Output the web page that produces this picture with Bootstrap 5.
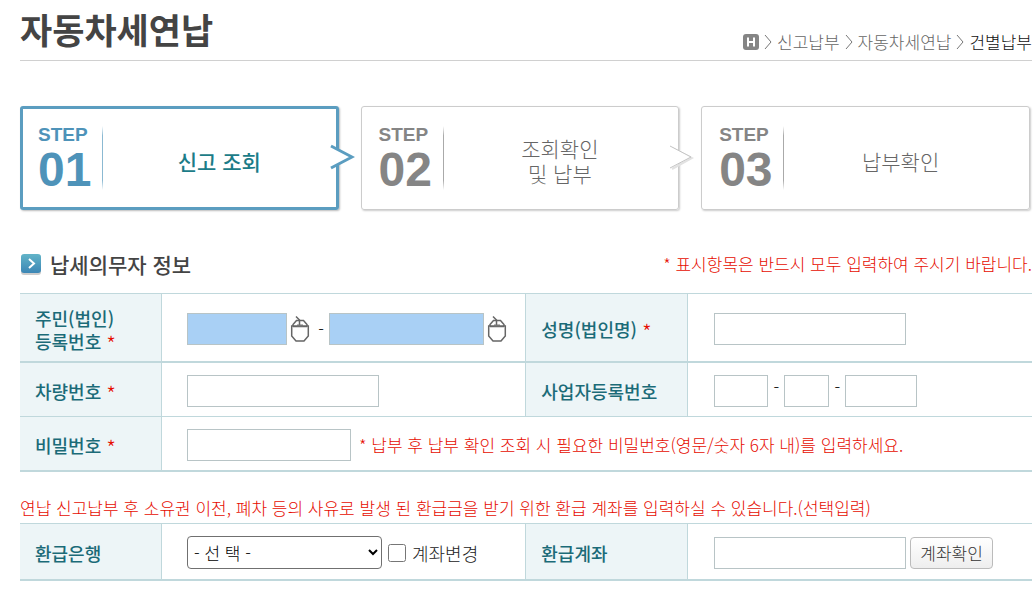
<!DOCTYPE html>
<html lang="ko">
<head>
<meta charset="utf-8">
<meta name="viewport" content="width=device-width, initial-scale=1">
<title>자동차세연납</title>
<link href="https://cdn.jsdelivr.net/npm/bootstrap@5.3.0/dist/css/bootstrap.min.css" rel="stylesheet">
<style>
body{font-family:"Noto Sans CJK KR",sans-serif;font-size:17px;line-height:24px;color:#222;font-weight:300}
.page{padding:0 4px 8px 20px}
.page-head{height:61px;border-bottom:1px solid #d0d0d0}
.page-head h1{font-size:35px;line-height:58px;font-weight:700;color:#444}
.crumbs{line-height:24px;padding-bottom:6px}
.crumbs a{color:#666}
.crumbs .current{color:#111}
.steps{display:grid;grid-template-columns:31fr 31fr 32fr;gap:22px;margin:45px 2px 0 0}
.step{position:relative;height:104px;border:1px solid #ccc;border-radius:3px;box-shadow:1px 1px 2px #ccc;padding:2px;color:#666}
.step.active{border:3px solid #5b9dc0;padding:0;box-shadow:1px 1px 2px #bbb;color:#1c7c88}
.step-no{width:79px;padding:18px 0 0 15px;color:#858585;font-family:"Liberation Sans",sans-serif;font-weight:700}
.step.active .step-no{color:#4e93b9}
.step-no small{font-size:19px;line-height:16px}
.step-no b{font-size:48px;line-height:54px}
.step-rule{width:1px;height:64px;background:linear-gradient(transparent,#aaa 15%,#aaa 85%,transparent)}
.step.active .step-rule{background:linear-gradient(transparent,#8bb9d2 15%,#8bb9d2 85%,transparent)}
.step-name{font-size:21px;line-height:25px;padding-top:6px}
.step:last-child .step-name{padding-right:10px}
.step.active .step-name{font-weight:500}
.step-arrow{position:absolute;right:-16px;top:36px}
.step.active .step-arrow{top:34px;right:-19px}
.section-head{padding:41px 0 16px}
.section-head h2{font-size:21px;line-height:26px;font-weight:500;color:#444}
.req,.notice{color:#e60c00}
.form-grid{width:100%;table-layout:fixed;border-collapse:separate;border-spacing:0;border-top:1px solid #c0d8dc}
.form-grid th,.form-grid td{border-bottom:1px solid #c0d8dc;border-right:1px solid #c0d8dc;height:54px;padding:2px 0 0 26px}
.form-grid tr>:last-child{border-right:0}
.form-grid .thick>*{border-bottom-width:2px;height:55px}
.form-grid th{background:#edf5f7;color:#1b6b78;font-size:18px;line-height:23px;font-weight:500;padding:4px 4px 0 15px}
.form-grid th:first-child+td{padding-left:25px}
.form-grid .req{font-weight:300;font-size:22px;line-height:0;vertical-align:-4px}
.c-label{width:142px}.c-field{width:36%}.c-label2{width:162px}
.form-grid .tall>*{height:69px}
.form-grid .bank-row>*{height:57px}
.box{height:32px;border:1px solid #b8c4c6;border-radius:0;background:#fff;padding:0 6px}
.box.secure{background:#a9d0f5}
.w-a{width:100px}.w-b{width:155px}.w-c{width:192px}.w-d{width:164px}.w-e{width:54px}.w-f{width:45px}.w-g{width:72px}
.mouse{margin-left:3px}
.dash{width:16px;text-align:center;color:#000}
.bank{width:195px;height:33px;border:1px solid #707070;border-radius:4px;background:#fff;color:#000;font-weight:300;font-size:17px;padding:0 2px}
.tick{width:18px;height:18px;margin:0 6px}
.tick-label{font-size:18px}
.check-btn{height:32px;border:1px solid #bbb;border-radius:4px;background:linear-gradient(#fff,#eee);color:#333;font-weight:300;font-size:17px;line-height:28px;padding:0 9px}
.refund-note{padding:24px 0 3px}
</style>
</head>
<body>
<svg width="0" height="0" class="position-absolute" aria-hidden="true">
<symbol id="mouse" viewBox="0 0 20 28"><g fill="none" stroke="#666" stroke-width="1.500"><path d="M6 1.500L9.500 5v7"/><path d="M6.500 5.500h7L17 9.500v1.500H3V9.500zM3 11H1.700v10L6 26h8l4.300-5V11H17M3 11.500h14"/></g><path d="M7 10.500h6" stroke="#777" stroke-width="2"/></symbol>
</svg>
<main class="page">
<header class="page-head d-flex justify-content-between align-items-end">
<h1 class="m-0 align-self-start">자동차세연납</h1>
<nav class="crumbs d-flex align-items-center" aria-label="breadcrumb">
<a href="#" aria-label="홈" class="d-flex me-1"><svg width="16" height="16"><rect width="16" height="16" rx="3" fill="#858585"/><path d="M5 3.500v9M11 3.500v9M5 8h6" stroke="#fff" stroke-width="2"/></svg></a>
<svg class="me-1" width="10" height="18"><path d="M2 2l6 7-6 7" fill="none" stroke="#777"/></svg>
<a href="#" class="text-decoration-none me-1">신고납부</a>
<svg class="me-1" width="10" height="18"><path d="M2 2l6 7-6 7" fill="none" stroke="#777"/></svg>
<a href="#" class="text-decoration-none me-1">자동차세연납</a>
<svg class="me-1" width="10" height="18"><path d="M2 2l6 7-6 7" fill="none" stroke="#777"/></svg>
<span class="current" aria-current="page">건별납부</span>
</nav>
</header>

<section class="steps">
<div class="step active d-flex align-items-center">
<div class="step-no d-flex flex-column align-self-start"><small>STEP</small><b>01</b></div><div class="step-rule"></div>
<div class="step-name flex-grow-1 text-center">신고 조회</div>
<svg class="step-arrow" width="25" height="30"><path d="M2 2v24h4V2z" fill="#fff"/><path d="M1 3l21 11L1 25" fill="#fff" stroke="#5b9dc0" stroke-width="3"/></svg>
</div>
<div class="step d-flex align-items-center">
<div class="step-no d-flex flex-column align-self-start"><small>STEP</small><b>02</b></div><div class="step-rule"></div>
<div class="step-name flex-grow-1 text-center">조회확인<br>및 납부</div>
<svg class="step-arrow" width="25" height="30"><path d="M3 5l20 10L3 26" fill="none" stroke="#e2e2e2" stroke-width="2"/><path d="M1 3l21 11L1 25" fill="#fff" stroke="#c4c4c4"/></svg>
</div>
<div class="step d-flex align-items-center">
<div class="step-no d-flex flex-column align-self-start"><small>STEP</small><b>03</b></div><div class="step-rule"></div>
<div class="step-name flex-grow-1 text-center">납부확인</div>
</div>
</section>

<form>
<div class="section-head d-flex justify-content-between align-items-center">
<h2 class="m-0 d-flex align-items-center gap-2"><svg width="22" height="22"><defs><linearGradient id="sq" x2="0" y2="1"><stop stop-color="#62b4c8"/><stop offset="1" stop-color="#3c86b5"/></linearGradient></defs><rect x="1" y="3" width="20" height="19" rx="3" fill="#ccc"/><rect x="1" y="1" width="20" height="19" rx="3" fill="url(#sq)"/><path d="M9 6l5 4.500L9 15" fill="none" stroke="#fff" stroke-width="2"/></svg>납세의무자 정보</h2>
<div class="notice">* 표시항목은 반드시 모두 입력하여 주시기 바랍니다.</div>
</div>
<table class="form-grid">
<colgroup><col class="c-label"><col class="c-field"><col class="c-label2"><col></colgroup>
<tr class="thick tall">
<th scope="row"><label for="id1">주민(법인)<br>등록번호 <span class="req">*</span></label></th>
<td><div class="d-flex align-items-center"><input id="id1" class="box secure w-a"><svg width="20" height="28" class="mouse"><use href="#mouse"/></svg><span class="dash mouse">-</span><input class="box secure w-b" type="password" aria-label="등록번호 뒷자리"><svg width="20" height="28" class="mouse"><use href="#mouse"/></svg></div></td>
<th scope="row"><label for="nm">성명(법인명) <span class="req">*</span></label></th>
<td><input id="nm" class="box w-c d-block"></td>
</tr>
<tr>
<th scope="row"><label for="car">차량번호 <span class="req">*</span></label></th>
<td><input id="car" class="box w-c d-block"></td>
<th scope="row"><label for="biz">사업자등록번호</label></th>
<td><div class="d-flex"><input id="biz" class="box w-e"><span class="dash">-</span><input class="box w-f" aria-label="사업자등록번호 가운데"><span class="dash">-</span><input class="box w-g" aria-label="사업자등록번호 끝"></div></td>
</tr>
<tr class="thick">
<th scope="row"><label for="pw">비밀번호 <span class="req">*</span></label></th>
<td colspan="3"><div class="d-flex align-items-center gap-2"><input id="pw" type="password" class="box w-d"><span class="notice">* 납부 후 납부 확인 조회 시 필요한 비밀번호(영문/숫자 6자 내)를 입력하세요.</span></div></td>
</tr>
</table>
<div class="notice refund-note">연납 신고납부 후 소유권 이전, 폐차 등의 사유로 발생 된 환급금을 받기 위한 환급 계좌를 입력하실 수 있습니다.(선택입력)</div>
<table class="form-grid">
<colgroup><col class="c-label"><col class="c-field"><col class="c-label2"><col></colgroup>
<tr class="thick bank-row">
<th scope="row"><label for="bank">환급은행</label></th>
<td><div class="d-flex align-items-center"><select id="bank" class="bank"><option>- 선 택 -</option></select><input type="checkbox" id="chg" class="tick"><label for="chg" class="tick-label">계좌변경</label></div></td>
<th scope="row"><label for="acc">환급계좌</label></th>
<td><div class="d-flex align-items-center gap-1"><input id="acc" class="box w-c"><button type="button" class="check-btn">계좌확인</button></div></td>
</tr>
</table>
</form>
</main>
<script src="https://cdn.jsdelivr.net/npm/bootstrap@5.3.0/dist/js/bootstrap.bundle.min.js"></script>
</body>
</html>
